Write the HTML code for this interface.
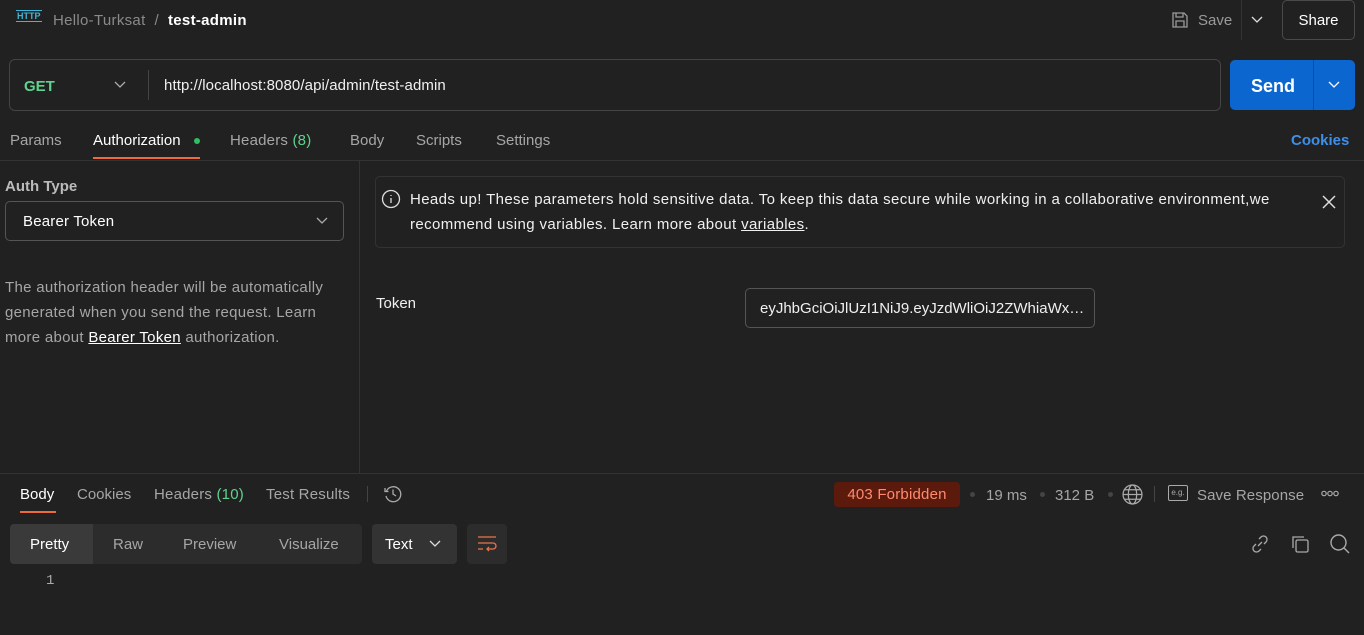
<!DOCTYPE html>
<html><head><meta charset="utf-8"><style>
*{box-sizing:border-box;margin:0;padding:0}
body{width:1364px;height:635px;background:#212121;font-family:"Liberation Sans",sans-serif;color:#e6e6e6;position:relative;overflow:hidden;font-size:15px}
.a{position:absolute;white-space:nowrap}
.g{color:#a6a6a6}
svg{position:absolute}
</style></head><body>
<!-- top bar -->
<div class="a" style="left:16px;top:10px;font-size:9px;color:#3fb6d8;font-weight:bold;border-top:1.5px solid #3fb6d8;border-bottom:1.5px solid #3fb6d8;line-height:10px;padding:0 1px">HTTP</div>
<div class="a g" style="left:53px;top:12px;font-size:15px;color:#8a8a8a;letter-spacing:0.3px">Hello-Turksat&nbsp;&nbsp;/</div>
<div class="a" style="left:168px;top:12px;font-size:15px;font-weight:bold;color:#fff;letter-spacing:0.3px">test-admin</div>
<svg style="left:1171px;top:11px" width="18" height="18" viewBox="0 0 18 18" fill="none" stroke="#9a9a9a" stroke-width="1.3"><path d="M2 2h11l3 3v11H2z"/><path d="M5 2v4h7V2M5 16v-6h8v6"/></svg>
<div class="a" style="left:1198px;top:12px;color:#9a9a9a">Save</div>
<div class="a" style="left:1241px;top:0;width:1px;height:40px;background:#333"></div>
<svg style="left:1251px;top:16px" width="12" height="8" viewBox="0 0 12 8" fill="none" stroke="#ddd" stroke-width="1.3"><path d="M1 1l5 5 5-5"/></svg>
<div class="a" style="left:1282px;top:0;width:73px;height:40px;border:1px solid #4a4a4a;border-radius:5px;color:#fff;text-align:center;line-height:40px">Share</div>
<!-- url bar -->
<div class="a" style="left:9px;top:59px;width:1212px;height:52px;border:1px solid #444;border-radius:6px"></div>
<div class="a" style="left:24px;top:78px;color:#5fd38d;font-weight:bold">GET</div>
<svg style="left:114px;top:81px" width="12" height="8" viewBox="0 0 12 8" fill="none" stroke="#aaa" stroke-width="1.3"><path d="M1 1l5 5 5-5"/></svg>
<div class="a" style="left:148px;top:70px;width:1px;height:30px;background:#444"></div>
<div class="a" style="left:164px;top:77px;color:#f0f0f0;letter-spacing:0.1px">http://localhost:8080/api/admin/test-admin</div>
<div class="a" style="left:1230px;top:60px;width:125px;height:50px;background:#0c66d0;border-radius:5px"></div>
<div class="a" style="left:1313px;top:60px;width:1px;height:50px;background:#0a4fa0"></div>
<div class="a" style="left:1251px;top:76px;color:#fff;font-weight:bold;font-size:18px">Send</div>
<svg style="left:1328px;top:81px" width="12" height="8" viewBox="0 0 12 8" fill="none" stroke="#fff" stroke-width="1.3"><path d="M1 1l5 5 5-5"/></svg>
<!-- tabs -->
<div class="a g" style="left:10px;top:132px">Params</div>
<div class="a" style="left:93px;top:132px;color:#fff">Authorization</div>
<div class="a" style="left:194px;top:138px;width:6px;height:6px;border-radius:50%;background:#2fbf5f"></div>
<div class="a" style="left:93px;top:157px;width:107px;height:2px;background:#ee6a3a"></div>
<div class="a g" style="left:230px;top:132px;letter-spacing:0.2px">Headers <span style="color:#5fd38d">(8)</span></div>
<div class="a g" style="left:350px;top:132px">Body</div>
<div class="a g" style="left:416px;top:132px">Scripts</div>
<div class="a g" style="left:496px;top:132px">Settings</div>
<div class="a" style="left:1291px;top:132px;color:#3d8fe8;font-weight:bold">Cookies</div>
<div class="a" style="left:0;top:160px;width:1364px;height:1px;background:#333"></div>
<!-- left panel -->
<div class="a" style="left:359px;top:161px;width:1px;height:312px;background:#333"></div>
<div class="a" style="left:5px;top:178px;color:#bbb;font-weight:bold">Auth Type</div>
<div class="a" style="left:5px;top:201px;width:339px;height:40px;border:1px solid #555;border-radius:5px"></div>
<div class="a" style="left:23px;top:213px;color:#fff;letter-spacing:0.2px">Bearer Token</div>
<svg style="left:316px;top:217px" width="12" height="8" viewBox="0 0 12 8" fill="none" stroke="#aaa" stroke-width="1.3"><path d="M1 1l5 5 5-5"/></svg>
<div class="a g" style="left:5px;top:275px;line-height:25px;white-space:normal;width:340px;letter-spacing:0.3px">The authorization header will be automatically generated when you send the request. Learn more about <span style="color:#fff;text-decoration:underline">Bearer Token</span> authorization.</div>
<!-- right panel -->
<div class="a" style="left:375px;top:176px;width:970px;height:72px;border:1px solid #333;border-radius:5px"></div>
<svg style="left:381px;top:189px" width="20" height="20" viewBox="0 0 20 20" fill="none" stroke="#ddd" stroke-width="1.3"><circle cx="10" cy="10" r="8.5"/><path d="M10 9v5M10 6v1"/></svg>
<div class="a" style="left:410px;top:187px;color:#f0f0f0;line-height:25px;letter-spacing:0.38px">Heads up! These parameters hold sensitive data. To keep this data secure while working in a collaborative environment,we<br>recommend using variables. Learn more about <span style="text-decoration:underline">variables</span>.</div>
<svg style="left:1322px;top:195px" width="14" height="14" viewBox="0 0 14 14" stroke="#ddd" stroke-width="1.5"><path d="M1 1l12 12M13 1L1 13"/></svg>
<div class="a" style="left:376px;top:295px;color:#f0f0f0">Token</div>
<div class="a" style="left:745px;top:288px;width:350px;height:40px;border:1px solid #555;border-radius:5px;overflow:hidden"></div>
<div class="a" style="left:760px;top:300px;color:#f0f0f0;width:325px;overflow:hidden;text-overflow:ellipsis">eyJhbGciOiJlUzI1NiJ9.eyJzdWliOiJ2ZWhiaWxlIiwia</div>
<!-- response -->
<div class="a" style="left:0;top:473px;width:1364px;height:1px;background:#333"></div>
<div class="a" style="left:20px;top:486px;color:#fff">Body</div>
<div class="a" style="left:20px;top:511px;width:36px;height:2px;background:#ee6a3a"></div>
<div class="a g" style="left:77px;top:486px">Cookies</div>
<div class="a g" style="left:154px;top:486px;letter-spacing:0.2px">Headers <span style="color:#5fd38d">(10)</span></div>
<div class="a g" style="left:266px;top:486px;letter-spacing:0.2px">Test Results</div>
<div class="a" style="left:367px;top:486px;width:1px;height:16px;background:#444"></div>
<svg style="left:383px;top:484px" width="20" height="20" viewBox="0 0 20 20" fill="none" stroke="#aaa" stroke-width="1.3"><path d="M3.5 7A7.5 7.5 0 1 1 3 12"/><path d="M2 4v3.5h3.5M10 5.5V10l3 2"/></svg>
<div class="a" style="left:834px;top:482px;width:126px;height:25px;background:#5c1a0c;border-radius:4px;color:#ff8a70;text-align:center;line-height:26px;letter-spacing:0.2px">403 Forbidden</div>
<div class="a" style="left:970px;top:492px;width:5px;height:5px;border-radius:50%;background:#444"></div>
<div class="a g" style="left:986px;top:487px">19 ms</div>
<div class="a" style="left:1040px;top:492px;width:5px;height:5px;border-radius:50%;background:#444"></div>
<div class="a g" style="left:1055px;top:487px">312 B</div>
<div class="a" style="left:1108px;top:492px;width:5px;height:5px;border-radius:50%;background:#444"></div>
<svg style="left:1122px;top:484px" width="21" height="21" viewBox="0 0 20 20" fill="none" stroke="#aaa" stroke-width="1.2"><circle cx="10" cy="10" r="9"/><ellipse cx="10" cy="10" rx="4" ry="9"/><path d="M1 10h18M2.5 5.5h15M2.5 14.5h15"/></svg>
<div class="a" style="left:1154px;top:486px;width:1px;height:16px;background:#444"></div>
<div class="a" style="left:1168px;top:485px;width:20px;height:16px;border:1px solid #aaa;border-radius:2px;font-size:8px;color:#aaa;line-height:14px;text-align:center">e.g.</div>
<div class="a g" style="left:1197px;top:487px;letter-spacing:0.1px">Save Response</div>
<svg style="left:1321px;top:490px" width="18" height="7" viewBox="0 0 18 7" fill="none" stroke="#aaa" stroke-width="1.2"><circle cx="3" cy="3.5" r="2.2"/><circle cx="9" cy="3.5" r="2.2"/><circle cx="15" cy="3.5" r="2.2"/></svg>
<!-- body controls -->
<div class="a" style="left:10px;top:524px;width:352px;height:40px;background:#2c2c2c;border-radius:4px"></div>
<div class="a" style="left:10px;top:524px;width:83px;height:40px;background:#3a3a3a;border-radius:4px 0 0 4px"></div>
<div class="a" style="left:30px;top:536px;color:#fff">Pretty</div>
<div class="a g" style="left:113px;top:536px">Raw</div>
<div class="a g" style="left:183px;top:536px">Preview</div>
<div class="a g" style="left:279px;top:536px">Visualize</div>
<div class="a" style="left:372px;top:524px;width:85px;height:40px;background:#333;border-radius:4px"></div>
<div class="a" style="left:385px;top:536px;color:#fff">Text</div>
<svg style="left:429px;top:540px" width="12" height="8" viewBox="0 0 12 8" fill="none" stroke="#ddd" stroke-width="1.3"><path d="M1 1l5 5 5-5"/></svg>
<div class="a" style="left:467px;top:524px;width:40px;height:40px;background:#2c2c2c;border-radius:4px"></div>
<svg style="left:477px;top:535px" width="20" height="18" viewBox="0 0 20 18" fill="none" stroke="#e8744a" stroke-width="1.3"><path d="M1 2h18M1 8h15a3 3 0 0 1 0 6h-6M12 12l-2 2 2 2M1 14h5"/></svg>
<svg style="left:1250px;top:534px" width="20" height="20" viewBox="0 0 20 20" fill="none" stroke="#aaa" stroke-width="1.3"><path d="M8 12l4-4M9 5l2-2a3.5 3.5 0 0 1 5 5l-2 2M11 15l-2 2a3.5 3.5 0 0 1-5-5l2-2"/></svg>
<svg style="left:1290px;top:534px" width="20" height="20" viewBox="0 0 20 20" fill="none" stroke="#aaa" stroke-width="1.3"><rect x="6" y="6" width="12" height="12" rx="1.5"/><path d="M3 14V3h11"/></svg>
<svg style="left:1329px;top:533px" width="22" height="22" viewBox="0 0 22 22" fill="none" stroke="#aaa" stroke-width="1.4"><circle cx="9.5" cy="9.5" r="7.5"/><path d="M15 15l5 5"/></svg>
<div class="a" style="left:46px;top:573px;color:#aaa;font-family:'Liberation Mono',monospace;font-size:14px">1</div>
</body></html>
